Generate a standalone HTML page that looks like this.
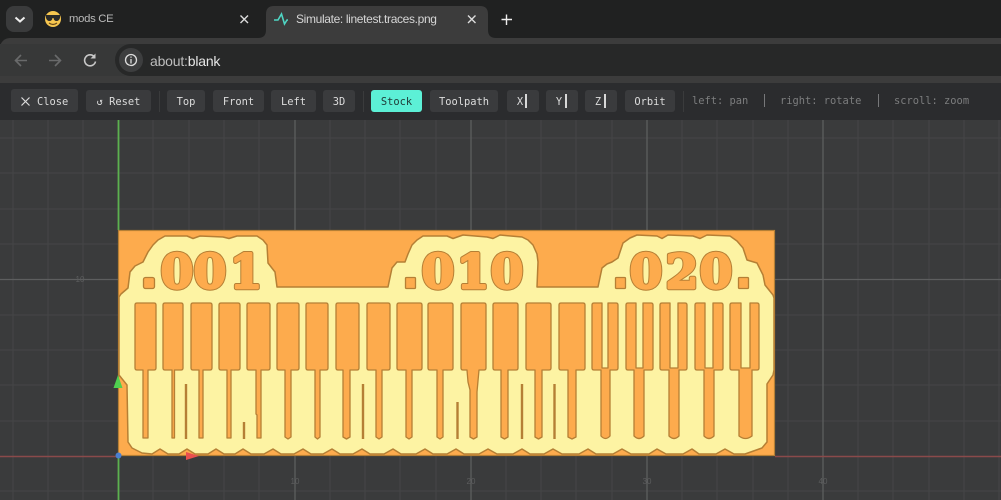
<!DOCTYPE html>
<html><head><meta charset="utf-8"><style>
html,body{margin:0;padding:0;background:#202121;width:1001px;height:500px;overflow:hidden}
#r{position:relative;width:1001px;height:500px;overflow:hidden;font-family:"Liberation Sans",sans-serif}
.a{position:absolute}
.b{position:absolute;top:90px;height:22px;background:#3a3b3d;border-radius:3px;color:#dcdcdc;font:10.4px/24px "DejaVu Sans Mono",monospace;text-align:center;white-space:pre}
.s{position:absolute;top:91px;width:1px;height:21px;background:#3a3b3c}
.h{position:absolute;top:94px;color:#7c7d7e;font:10.4px/15px "DejaVu Sans Mono",monospace;white-space:pre}
.v{position:absolute;top:94px;width:1.500px;height:14px;background:#d8d8d8}
.d{font-family:"DejaVu Serif","Liberation Serif",serif;font-weight:700;font-size:47px}
.d1{fill:#b57f35;stroke:#b57f35;stroke-width:4.400px;stroke-linejoin:round}
.d2{fill:#fdab4d;stroke:#fdab4d;stroke-width:2.400px;stroke-linejoin:round}
</style></head><body><div id="r">
<div class="a" style="left:0;top:0;width:1001px;height:38px;background:#202121"></div>
<div class="a" style="left:6px;top:6px;width:27px;height:26px;background:#3a3b3c;border-radius:8px"></div>
<svg class="a" style="left:0;top:0" width="1001" height="38" viewBox="0 0 1001 38">
<path d="M15.500 17.500L20 21.500L24.500 17.500" fill="none" stroke="#eee" stroke-width="2"/>
<path d="M258 38Q266 38 266 30V14Q266 6 274 6H480Q488 6 488 14V30Q488 38 496 38Z" fill="#3c3c3c"/>
<circle cx="53" cy="19" r="8" fill="#f6c64f"/>
<path d="M46 15H60V18Q59 21 56.500 21Q54 21 53.500 18H52.500Q52 21 49.500 21Q47 21 46 18Z" fill="#2a2a28"/>
<path d="M49 23Q53 26 57 23" stroke="#6a4a1a" stroke-width="1.200" fill="none"/>
<path d="M240.500 15.500L248 23M248 15.500L240.500 23M468 15.500L475.500 23M475.500 15.500L468 23" stroke="#ddd" stroke-width="1.400"/>
<path d="M274 20H278L281.500 14L284.500 24L287 20H288" fill="none" stroke="#4fd6c4" stroke-width="1.600"/>
<path d="M506.500 14.500V25M501.500 19.500H512" stroke="#eee" stroke-width="1.400"/>
</svg>
<div class="a" style="left:69px;top:12px;color:#b9b9b9;font-size:11.300px;letter-spacing:-.3px;line-height:15px;white-space:nowrap">mods CE</div>
<div class="a" style="left:296px;top:12px;color:#d6d6d6;font-size:12px;letter-spacing:-.35px;line-height:15px;white-space:nowrap">Simulate: linetest.traces.png</div>
<div class="a" style="left:0;top:38px;width:1001px;height:46px;background:#3c3c3c;border-radius:10px 0 0 0"></div>
<div class="a" style="left:0;top:44px;width:135px;height:32px;background:#373838"></div>
<div class="a" style="left:115px;top:44px;width:886px;height:32px;background:#272828;border-radius:16px 0 0 16px"></div>
<div class="a" style="left:119px;top:48px;width:24px;height:24px;background:#3d3e3f;border-radius:12px"></div>
<svg class="a" style="left:0;top:44px" width="145" height="32" viewBox="0 44 145 32">
<path d="M27 60.500H16M21 55L15.500 60.500L21 66" stroke="#696a6b" stroke-width="1.600" fill="none"/>
<path d="M49 60.500H60M55 55L60.500 60.500L55 66" stroke="#696a6b" stroke-width="1.600" fill="none"/>
<path d="M94.500 57A5.500 5.500 0 1 0 95.500 61.500" stroke="#c8c8c8" stroke-width="1.600" fill="none"/>
<path d="M95.500 53.500V58.500H90.500Z" fill="#c8c8c8"/>
<circle cx="131" cy="60" r="5.500" fill="none" stroke="#ddd" stroke-width="1.300"/><path d="M131 59V63.500M131 56.500V57.800" stroke="#ddd" stroke-width="1.300"/>
</svg>
<div class="a" style="left:150px;top:53px;font-size:14px;letter-spacing:-.2px;line-height:16px;color:#bdbdbd;white-space:nowrap">about:<span style="color:#e6e6e6">blank</span></div>
<div class="a" style="left:0;top:83px;width:1001px;height:37px;background:#2b2c2e"></div>
<div class="b" style="left:11px;width:41px;padding-left:26px;top:89px;height:23px;line-height:26px;text-align:left">Close</div>
<svg class="a" style="left:20px;top:96px" width="11" height="11"><path d="M1.500 1.500L9.500 9.500M9.500 1.500L1.500 9.500" stroke="#dcdcdc" stroke-width="1.200"/></svg>
<div class="b" style="left:86px;width:65px">↺ Reset</div>
<div class="s" style="left:159px"></div>
<div class="b" style="left:167px;width:38px">Top</div>
<div class="b" style="left:213px;width:51px">Front</div>
<div class="b" style="left:271px;width:45px">Left</div>
<div class="b" style="left:323px;width:32px">3D</div>
<div class="s" style="left:363px"></div>
<div class="b" style="left:371px;width:51px;background:#5cf0d6;color:#1f3a36">Stock</div>
<div class="b" style="left:430px;width:68px">Toolpath</div>
<div class="b" style="left:507px;width:26px;padding-right:6px">X</div><div class="v" style="left:525px"></div>
<div class="b" style="left:546px;width:26px;padding-right:6px">Y</div><div class="v" style="left:565px"></div>
<div class="b" style="left:585px;width:26px;padding-right:6px">Z</div><div class="v" style="left:604px"></div>
<div class="b" style="left:625px;width:50px">Orbit</div>
<div class="s" style="left:683px"></div>
<div class="h" style="left:692px">left: pan</div>
<div class="a" style="left:764px;top:94px;width:1px;height:13px;background:#77787a"></div>
<div class="h" style="left:780px">right: rotate</div>
<div class="a" style="left:878px;top:94px;width:1px;height:13px;background:#77787a"></div>
<div class="h" style="left:894px">scroll: zoom</div>

<svg class="a" style="left:0;top:120px;filter:blur(.35px)" width="1001" height="380" viewBox="0 120 1001 380">
<rect x="-5" y="115" width="1011" height="390" fill="#3a3b3c"/>
<path d="M13 120V500M48 120V500M83 120V500M153 120V500M189 120V500M224 120V500M259 120V500M330 120V500M365 120V500M400 120V500M436 120V500M506 120V500M541 120V500M576 120V500M612 120V500M682 120V500M717 120V500M753 120V500M788 120V500M858 120V500M893 120V500M929 120V500M964 120V500M999 120V500M0 138H1001M0 173H1001M0 209H1001M0 244H1001M0 315H1001M0 350H1001M0 385H1001M0 421H1001M0 491H1001" stroke="#454647" stroke-width="1"/>
<path d="M295 120V500M471 120V500M647 120V500M823 120V500M0 279.500H1001" stroke="#5d5e5f" stroke-width="1.300"/>
<path d="M0 456.500H118" stroke="#8a4a4a" stroke-width="1.500"/>
<path d="M775 456.500H1001" stroke="#8a4a4a" stroke-width="1.500"/>
<path d="M118.500 120V230M118.500 456V500" stroke="#5cb14f" stroke-width="1.800"/>
<g font-family="Liberation Sans,sans-serif" font-size="8" fill="#5c5d5e" text-anchor="middle">
<text x="80" y="282">10</text><text x="295" y="484">10</text><text x="471" y="484">20</text><text x="647" y="484">30</text><text x="823" y="484">40</text>
</g>

<rect x="118.500" y="230.500" width="656" height="225" fill="#fdab4d" stroke="#b57f35" stroke-width="1.200"/>
<path fill="#fdf3a3" stroke="#b57f35" stroke-width="1.500" stroke-linejoin="round" d="M119 297L121 294L128 288L130 272L135 266L143 262L148 252L153 245L158 240L165 236L187 236L193 238.500L200 236L223 237L229 238.500L237 236L257 236L263 240L267 245L268 263L275 272L277 287L388 287L392 268L397 262L405 262L408 254L412 245L417 240L423 236L447 236L453 238.500L463 235L487 237L493 238.500L500 235L522 237L528 240L533 245L537 254L538 262L537 287L598 287L602 268L607 264L612 262L618 258L623 243L630 238L637 235L657 236L662 238.500L668 235L693 236L700 238.500L707 235L730 236L737 241L743 248L747 260L757 263L763 275L765 285L773 295L774 298L774 370L773 375L767 384L767 442L762 448L745 454L734 454L725 449L716 454L699 454L692 449L683 454L666 454L657 449L649 454L631 454L622 449L613 454L596 454L588 449L579 454L562 454L553 449L544 454L530 454L522 449L513 454L497 454L488 449L479 454L464 454L456 449L447 454L433 454L425 449L416 454L401 454L393 449L384 454L370 454L362 449L353 454L340 454L332 449L323 454L311 454L303 449L294 454L281 454L273 449L264 454L251 454L243 449L235 454L224 454L216 449L208 454L195 454L187 449L179 454L168 454L160 449L152 454L142 453L132 448L128 442L127 385L119 375Z"/>

<g fill="#fdab4d" stroke="#b57f35" stroke-width="1.300" stroke-linejoin="round">
<path d="M137 303H154Q156 303 156 305V368Q156 370 154 370H148V438H143V370H137Q135 370 135 368V305Q135 303 137 303Z"/>
<path d="M165 303H181Q183 303 183 305V368Q183 370 181 370H174.500V438H172V370H165Q163 370 163 368V305Q163 303 165 303Z"/>
<path d="M193 303H210Q212 303 212 305V368Q212 370 210 370H203V438H199V370H193Q191 370 191 368V305Q191 303 193 303Z"/>
<path d="M221 303H238Q240 303 240 305V368Q240 370 238 370H231V438H227V370H221Q219 370 219 368V305Q219 303 221 303Z"/>
<path d="M249 303H268Q270 303 270 305V368Q270 370 268 370H261V438H257V415L256 414V370H249Q247 370 247 368V305Q247 303 249 303Z"/>
<path d="M279 303H297Q299 303 299 305V368Q299 370 297 370H291V437L288 439L285 437V370H279Q277 370 277 368V305Q277 303 279 303Z"/>
<path d="M308 303H326Q328 303 328 305V368Q328 370 326 370H320V437L317.500 439L315 437V370H308Q306 370 306 368V305Q306 303 308 303Z"/>
<path d="M338 303H357Q359 303 359 305V368Q359 370 357 370H350V437L346.500 439L343 437V370H338Q336 370 336 368V305Q336 303 338 303Z"/>
<path d="M369 303H388Q390 303 390 305V368Q390 370 388 370H382V437L379 439L376 437V370H369Q367 370 367 368V305Q367 303 369 303Z"/>
<path d="M399 303H420Q422 303 422 305V368Q422 370 420 370H412V437L409 439L406 437V370H399Q397 370 397 368V305Q397 303 399 303Z"/>
<path d="M430 303H451Q453 303 453 305V368Q453 370 451 370H443V437L440 439L437 437V370H430Q428 370 428 368V305Q428 303 430 303Z"/>
<path d="M463 303H484Q486 303 486 305V368Q486 370 484 370H479L477 392V437L473.500 439L470 437V390L468 382L467 370H463Q461 370 461 368V305Q461 303 463 303Z"/>
<path d="M495 303H516Q518 303 518 305V368Q518 370 516 370H508V437L504.500 439L501 437V370H495Q493 370 493 368V305Q493 303 495 303Z"/>
<path d="M528 303H549Q551 303 551 305V368Q551 370 549 370H542V437L538.500 439L535 437V370H528Q526 370 526 368V305Q526 303 528 303Z"/>
<path d="M561 303H583Q585 303 585 305V368Q585 370 583 370H576V437L572 439L568 437V370H561Q559 370 559 368V305Q559 303 561 303Z"/>
<path d="M594 303H602V368H608V303H616Q618 303 618 305V368Q618 370 616 370H610V436Q605.500 441 601 436V370H594Q592 370 592 368V305Q592 303 594 303Z"/>
<path d="M628 303H636V368H643V303H651Q653 303 653 305V368Q653 370 651 370H644V436Q639 441 634 436V370H628Q626 370 626 368V305Q626 303 628 303Z"/>
<path d="M662 303H670V368H678V303H685Q687 303 687 305V368Q687 370 685 370H679V436Q674 441 669 436V370H662Q660 370 660 368V305Q660 303 662 303Z"/>
<path d="M697 303H705V368H713V303H721Q723 303 723 305V368Q723 370 721 370H714V436Q709 441 704 436V370H697Q695 370 695 368V305Q695 303 697 303Z"/>
<path d="M732 303H741V368H750V303H757Q759 303 759 305V368Q759 370 757 370H752V436Q745.500 441 739 436V370H732Q730 370 730 368V305Q730 303 732 303Z"/>
</g>
<path d="M186 384V439M244 422V439M363 384V439M457.500 402V439M522 384V439M554.500 384V439" stroke="#b57f35" stroke-width="2.400"/>

<rect x="143.500" y="277.500" width="11" height="11" rx="2" fill="#fdab4d" stroke="#b57f35" stroke-width="1.300"/>
<rect x="405.500" y="277.500" width="10" height="11" rx="1" fill="#fdab4d" stroke="#b57f35" stroke-width="1.300"/>
<rect x="615.500" y="277.500" width="10" height="11" rx="1" fill="#fdab4d" stroke="#b57f35" stroke-width="1.300"/>
<rect x="738.500" y="277.500" width="10" height="11" rx="1" fill="#fdab4d" stroke="#b57f35" stroke-width="1.300"/>
<g class="d d1" text-anchor="middle">
<text x="177" y="288">0</text><text x="210" y="288">0</text><text x="246" y="288">1</text>
<text x="438" y="288">0</text><text x="473" y="288">1</text><text x="507" y="288">0</text>
<text x="646" y="288">0</text><text x="682" y="288">2</text><text x="716" y="288">0</text>
</g>
<g class="d d2" text-anchor="middle">
<text x="177" y="288">0</text><text x="210" y="288">0</text><text x="246" y="288">1</text>
<text x="438" y="288">0</text><text x="473" y="288">1</text><text x="507" y="288">0</text>
<text x="646" y="288">0</text><text x="682" y="288">2</text><text x="716" y="288">0</text>
</g>

<path d="M118 375L122.500 388H113.500Z" fill="#4fcf4f"/>
<path d="M186 452V460L199 456Z" fill="#e8504f"/>
<circle cx="118.500" cy="455.500" r="3" fill="#4a7fd0"/>
</svg>
</div></body></html>
